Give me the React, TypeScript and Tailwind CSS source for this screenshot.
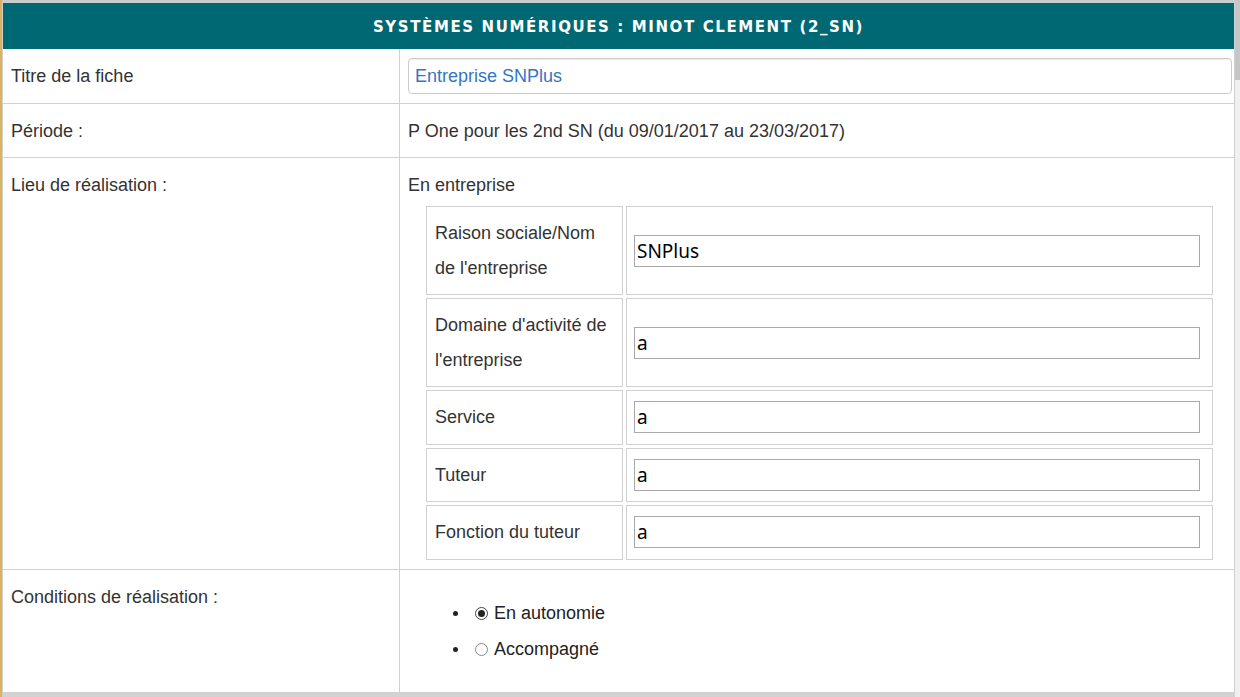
import React from "react";

const subRows = [
  { label: "Raison sociale/Nom de l'entreprise", value: "SNPlus" },
  { label: "Domaine d'activité de l'entreprise", value: "a" },
  { label: "Service", value: "a" },
  { label: "Tuteur", value: "a" },
  { label: "Fonction du tuteur", value: "a" },
];

function Radio({ checked }: { checked?: boolean }) {
  return (
    <span
      className={
        "w-[13px] h-[13px] rounded-full border bg-white flex items-center justify-center shrink-0 " +
        (checked ? "border-[#444]" : "border-[#8a8a8a]")
      }
    >
      {checked && <span className="w-[7px] h-[7px] rounded-full bg-[#222]" />}
    </span>
  );
}

export default function App() {
  return (
    <div className="w-[1240px] h-[697px] flex overflow-hidden bg-white font-['Liberation_Sans',Arial,sans-serif] text-[18px] text-[#333]">
      <div className="w-[2px] shrink-0 bg-[#d9b45d]" />
      <div className="w-[1233px] shrink-0 flex flex-col">
        <div className="h-[3px] shrink-0 bg-[#cccccc]" />
        <div className="flex-1 flex flex-col border-x border-[#d0d0d0]">
          <div className="h-[46px] shrink-0 bg-[#006872] flex items-center justify-center pt-[2px]">
            <span className="font-['DejaVu_Sans',Verdana,sans-serif] font-bold text-[15px] tracking-[1.6px] text-white">
              SYSTÈMES NUMÉRIQUES : MINOT CLEMENT (2_SN)
            </span>
          </div>

          {/* Row 1 */}
          <div className="flex border-b border-[#d0d0d0]">
            <div className="w-[397px] shrink-0 border-r border-[#d0d0d0] pl-[8px] pt-[9px] pb-[9px] leading-[36px]">
              Titre de la fiche
            </div>
            <div className="flex-1 pl-[8px] pt-[9px] pb-[9px]">
              <input
                readOnly
                value="Entreprise SNPlus"
                className="w-[824px] h-[36px] rounded-[4px] border border-[#cccccc] shadow-[inset_0_1px_1px_rgba(0,0,0,0.075)] px-[6px] text-[18px] text-[#3476c2] font-['Liberation_Sans',Arial,sans-serif] outline-none"
              />
            </div>
          </div>

          {/* Row 2 */}
          <div className="flex border-b border-[#d0d0d0]">
            <div className="w-[397px] shrink-0 border-r border-[#d0d0d0] pl-[8px] pt-[9px] pb-[8px] leading-[36px]">
              Période :
            </div>
            <div className="flex-1 pl-[8px] pt-[9px] pb-[8px] leading-[36px]">
              P One pour les 2nd SN (du 09/01/2017 au 23/03/2017)
            </div>
          </div>

          {/* Row 3 */}
          <div className="flex border-b border-[#d0d0d0]">
            <div className="w-[397px] shrink-0 border-r border-[#d0d0d0] pl-[8px] pt-[9px] pb-[8px] leading-[36px]">
              Lieu de réalisation :
            </div>
            <div className="flex-1 pl-[8px] pt-[9px] pb-[9px]">
              <div className="leading-[36px]">En entreprise</div>
              <div className="mt-[3px] ml-[18px] grid grid-cols-[197px_587px] gap-[3px]">
                {subRows.map((r) => (
                  <React.Fragment key={r.label}>
                    <div className="border border-[#d0d0d0] px-[8px] py-[9px] leading-[34.5px]">
                      {r.label}
                    </div>
                    <div className="border border-[#d0d0d0] pl-[7px] flex items-center">
                      <input
                        readOnly
                        value={r.value}
                        className="w-[566px] h-[32px] border border-[#a9a9a9] px-[2px] text-[19px] text-black font-['Noto_Sans',sans-serif] outline-none"
                      />
                    </div>
                  </React.Fragment>
                ))}
              </div>
            </div>
          </div>

          {/* Row 4 */}
          <div className="flex border-b border-[#d0d0d0]">
            <div className="w-[397px] shrink-0 border-r border-[#d0d0d0] pl-[8px] pt-[9px] pb-[8px] leading-[36px]">
              Conditions de réalisation :
            </div>
            <div className="flex-1 pl-[8px] pt-[9px] pb-[8px]">
              <div className="pt-[17px] pb-[16px] text-[#222]">
                {[
                  { t: "En autonomie", c: true },
                  { t: "Accompagné", c: false },
                ].map((it) => (
                  <div key={it.t} className="h-[36px] flex items-center">
                    <span className="ml-[44.5px] w-[5px] h-[5px] rounded-full bg-[#222] shrink-0" />
                    <span className="ml-[17.5px]">
                      <Radio checked={it.c} />
                    </span>
                    <span className="ml-[6px]">{it.t}</span>
                  </div>
                ))}
              </div>
            </div>
          </div>
          <div className="flex-1 bg-[#d2d2d2]" />
        </div>
      </div>
      <div className="w-[5px] shrink-0 bg-[#f0f0f0] flex flex-col">
        <div className="h-[80px] bg-[#c6c6c6]" />
      </div>
    </div>
  );
}
